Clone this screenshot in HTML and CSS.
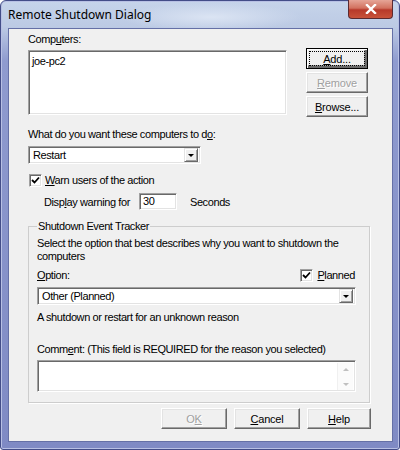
FILE: index.html
```html
<!DOCTYPE html>
<html lang="en">
<head>
    <meta charset="UTF-8">
    <title>Remote Shutdown Dialog</title>
    <link rel="stylesheet" href="styles.css">
</head>
<body>
    <div class="window">
        <div class="titlebar">
            <span class="title">Remote Shutdown Dialog</span>
            <span class="close">
                <svg width="12" height="10" viewBox="0 0 12 10"><path d="M2 1 L10 9 M10 1 L2 9" stroke="#fff" stroke-width="2.4" stroke-linecap="square"/></svg>
            </span>
        </div>
        <div class="client">
            <div class="label first">Comp<u>u</u>ters:</div>
            <div class="computers">
                <div class="listbox">joe-pc2</div>
                <div class="side-buttons">
                    <button class="btn default"><span class="focus"><u>A</u>dd...</span></button>
                    <button class="btn" disabled><u>R</u>emove</button>
                    <button class="btn"><u>B</u>rowse...</button>
                </div>
            </div>

            <div class="label question">What do you want these computers to d<u>o</u>:</div>
            <div class="combo action">
                <span class="combo-text">Restart</span>
                <span class="combo-arrow"></span>
            </div>

            <div class="check warn">
                <span class="box"><svg width="9" height="9" viewBox="0 0 9 9"><path d="M1 4 L3.5 6.5 L8 1.5" fill="none" stroke="#000" stroke-width="1.8"/></svg></span>
                <span><u>W</u>arn users of the action</span>
            </div>
            <div class="warn-time">
                <span>Disp<u>l</u>ay warning for</span>
                <span class="edit">30</span>
                <span>Seconds</span>
            </div>

            <fieldset class="tracker">
                <legend>Shutdown Event Tracker</legend>
                <p class="hint">Select the option that best describes why you want to shutdown the computers</p>
                <div class="option-row">
                    <span><u>O</u>ption:</span>
                    <span class="check">
                        <span class="box"><svg width="9" height="9" viewBox="0 0 9 9"><path d="M1 4 L3.5 6.5 L8 1.5" fill="none" stroke="#000" stroke-width="1.8"/></svg></span>
                        <span><u>P</u>lanned</span>
                    </span>
                </div>
                <div class="combo reason">
                    <span class="combo-text">Other (Planned)</span>
                    <span class="combo-arrow"></span>
                </div>
                <p class="desc">A shutdown or restart for an unknown reason</p>
                <div class="label comment">Comm<u>e</u>nt: (This field is REQUIRED for the reason you selected)</div>
                <div class="memo">
                    <span class="memo-text"></span>
                    <span class="scrollbar">
                        <span class="arrow up"></span>
                        <span class="arrow down"></span>
                    </span>
                </div>
            </fieldset>

            <div class="actions">
                <button class="btn wide" disabled>O<u>K</u></button>
                <button class="btn wide"><u>C</u>ancel</button>
                <button class="btn wide help"><u>H</u>elp</button>
            </div>
        </div>
    </div>
</body>
</html>
```

FILE: styles.css
```css
body {
    margin: 0;
    font-family: "Liberation Sans", Arial, sans-serif;
    font-size: 11px;
    letter-spacing: -0.4px;
    color: #000;
    background: #fff;
}
u {
    text-decoration: underline;
    text-underline-offset: 1px;
}
.window {
    width: 400px;
    height: 450px;
    box-sizing: border-box;
    display: flex;
    flex-direction: column;
    padding: 0 6px 7px 7px;
    border: 1px solid #434d88;
    border-radius: 6px 6px 3px 3px;
    background: linear-gradient(to bottom, #c6d4ea 0, #bccae4 26px, #8f9bcf 60px, #7f8ac4 100%);
    box-shadow: inset 0 0 0 1px #b8c0e4;
}
.titlebar {
    height: 27px;
    display: flex;
    align-items: flex-start;
    background: radial-gradient(ellipse 90px 14px at 210px 16px, #dbe4f3, rgba(219,228,243,0));
    margin: 0 -6px 0 -7px;
    padding: 0 6px 0 7px;
}
.title {
    font-family: "Noto Sans", "Liberation Sans", sans-serif;
    font-size: 12px;
    letter-spacing: 0;
    line-height: 14px;
    margin-top: 7px;
    color: #000;
}
.close {
    margin-left: auto;
    margin-top: -1px;
    width: 45px;
    height: 19px;
    box-sizing: border-box;
    display: flex;
    align-items: center;
    justify-content: center;
    border: 1px solid #5b2a30;
    border-top: none;
    border-radius: 0 0 4px 4px;
    background: linear-gradient(to bottom, #e6a597 0, #d2715f 45%, #b7392a 55%, #c8523a 100%);
}
.client {
    flex: 1;
    border: 1px solid #6570a6;
    background: #f0f0f0;
    padding: 3px 21px 0 19px;
}
.label {
    line-height: 14px;
    height: 14px;
}
.computers {
    display: flex;
    margin-top: 2px;
}
.listbox {
    width: 259px;
    height: 65px;
    margin-top: 2px;
    box-sizing: border-box;
    background: #fff;
    border: 1px solid;
    border-color: #a0a0a0 #fff #fff #a0a0a0;
    box-shadow: inset 1px 1px 0 #696969, inset -1px -1px 0 #e3e3e3;
    padding: 3px 3px;
    line-height: 14px;
}
.side-buttons {
    display: flex;
    flex-direction: column;
    gap: 3px;
    margin-left: 19px;
}
.btn {
    width: 62px;
    height: 21px;
    box-sizing: border-box;
    padding: 0;
    font-family: inherit;
    font-size: 11px;
    letter-spacing: -0.2px;
    color: #000;
    background: #f0f0f0;
    border: 1px solid;
    border-color: #fff #696969 #696969 #fff;
    box-shadow: inset -1px -1px 0 #a0a0a0, inset 1px 1px 0 #e3e3e3;
    display: flex;
    align-items: center;
    justify-content: center;
}
.btn:disabled {
    color: #a0a0a0;
    text-shadow: 1px 1px 0 #fff;
}
.btn.default {
    border: 1px solid #000;
    box-shadow: inset 1px 1px 0 #fff, inset -2px -2px 0 #696969, inset -3px -3px 0 #a0a0a0;
}
.focus {
    display: flex;
    align-items: center;
    justify-content: center;
    width: 54px;
    height: 13px;
    border: 1px dotted #000;
}
.question {
    margin-top: 10px;
}
.combo {
    height: 18px;
    box-sizing: border-box;
    display: flex;
    align-items: center;
    background: #fff;
    border: 1px solid;
    border-color: #a0a0a0 #fff #fff #a0a0a0;
    box-shadow: inset 1px 1px 0 #696969, inset -1px -1px 0 #e3e3e3;
    padding: 2px 2px 2px 3px;
}
.combo.action {
    width: 173px;
    margin-top: 5px;
}
.combo-text {
    flex: 1;
    padding-left: 1px;
}
.combo-arrow {
    width: 14px;
    height: 14px;
    box-sizing: border-box;
    margin-top: -1px;
    background: #f0f0f0;
    border: 1px solid;
    border-color: #e3e3e3 #696969 #696969 #e3e3e3;
    box-shadow: inset 1px 1px 0 #fff, inset -1px -1px 0 #a0a0a0;
    display: flex;
    align-items: center;
    justify-content: center;
}
.combo-arrow::after {
    content: "";
    border-left: 3px solid transparent;
    border-right: 3px solid transparent;
    border-top: 3px solid #000;
    margin-top: 1px;
}
.check {
    display: flex;
    align-items: center;
    gap: 3px;
    line-height: 14px;
}
.check.warn {
    margin-top: 9px;
    margin-left: 1px;
}
.box {
    width: 13px;
    height: 13px;
    box-sizing: border-box;
    background: #fff;
    border: 1px solid;
    border-color: #a0a0a0 #fff #fff #a0a0a0;
    box-shadow: inset 1px 1px 0 #696969, inset -1px -1px 0 #e3e3e3;
    display: flex;
    align-items: center;
    justify-content: center;
}
.warn-time {
    display: flex;
    align-items: center;
    margin-top: 6px;
    padding-left: 16px;
    height: 17px;
}
.edit {
    width: 38px;
    height: 17px;
    box-sizing: border-box;
    margin-left: 9px;
    margin-right: 13px;
    padding: 1px 3px;
    background: #fff;
    border: 1px solid;
    border-color: #a0a0a0 #fff #fff #a0a0a0;
    box-shadow: inset 1px 1px 0 #696969, inset -1px -1px 0 #e3e3e3;
    line-height: 13px;
}
.tracker {
    margin: 9px 0 0 0;
    width: 342px;
    box-sizing: border-box;
    padding: 0 13px 10px 8px;
    border: 1px solid #cdcdcd;
    box-shadow: 1px 1px 0 #fff;
}
.tracker legend {
    padding: 0 1px;
    line-height: 14px;
}
.hint {
    margin: 4px 0 0 0;
    line-height: 13px;
}
.option-row {
    display: flex;
    justify-content: space-between;
    align-items: center;
    height: 14px;
    line-height: 14px;
    margin-top: 5px;
}
.option-row .check {
    margin-right: 1px;
    gap: 4px;
}
.combo.reason {
    margin-top: 5px;
}
.desc {
    margin: 5px 0 0 0;
    line-height: 14px;
}
.comment {
    margin-top: 18px;
}
.memo {
    height: 32px;
    margin-top: 4px;
    box-sizing: border-box;
    display: flex;
    background: #fff;
    border: 1px solid;
    border-color: #a0a0a0 #fff #fff #a0a0a0;
    box-shadow: inset 1px 1px 0 #696969, inset -1px -1px 0 #e3e3e3;
    padding: 2px 2px 1px 2px;
}
.memo-text {
    flex: 1;
}
.scrollbar {
    width: 15px;
    display: flex;
    flex-direction: column;
    justify-content: space-between;
    align-items: center;
    padding: 5px 0 4px;
    border-left: 1px solid #f0f0f0;
    background: #fbfbfb;
}
.arrow {
    border-left: 3px solid transparent;
    border-right: 3px solid transparent;
}
.arrow.up {
    border-bottom: 3px solid #c0c0c0;
}
.arrow.down {
    border-top: 3px solid #c0c0c0;
}
.actions {
    display: flex;
    justify-content: flex-end;
    gap: 7px;
    margin-top: 5px;
    width: 343px;
}
.btn.wide {
    width: 66px;
}
.btn.help {
    width: 64px;
}
```
